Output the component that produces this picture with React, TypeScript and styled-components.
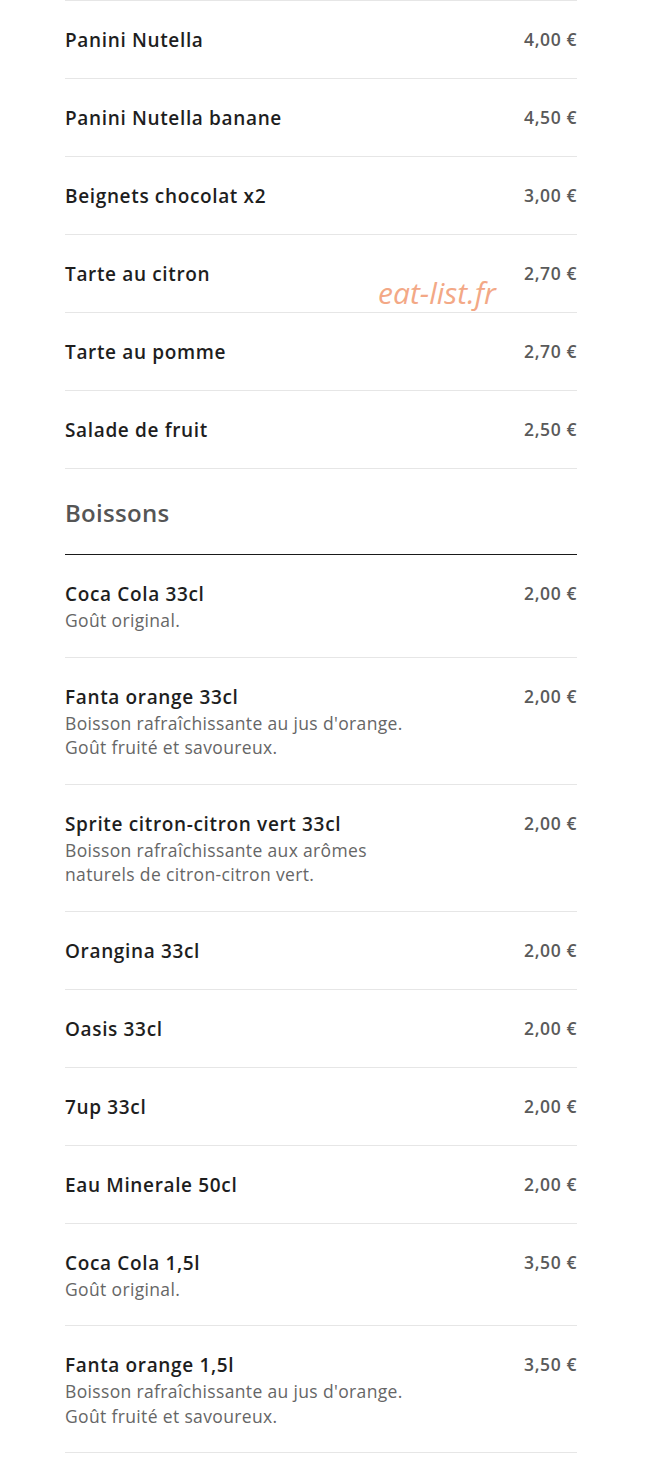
import React from "react";
import styled, { createGlobalStyle } from "styled-components";

const GlobalStyle = createGlobalStyle`
  body {
    margin: 0;
    background: #ffffff;
    font-family: "Open Sans", "Noto Sans", sans-serif;
  }
`;

const Page = styled.div`
  position: relative;
  width: 646px;
  padding: 0 69px 0 65px;
  box-sizing: border-box;
`;

const List = styled.div<{ $ruled?: boolean }>`
  display: flex;
  flex-direction: column;
  border-top: ${(p) => (p.$ruled ? "1px solid #e6e6e6" : "none")};
`;

const Row = styled.div`
  display: flex;
  justify-content: space-between;
  align-items: flex-start;
  padding: 25px 0 24px;
  border-bottom: 1px solid #e6e6e6;
`;

const Info = styled.div`
  display: flex;
  flex-direction: column;
`;

const Name = styled.div`
  font-size: 19px;
  line-height: 28px;
  font-weight: 600;
  letter-spacing: 0.65px;
  color: #1e1e1e;
`;

const Desc = styled.div`
  font-size: 17.5px;
  line-height: 24.5px;
  letter-spacing: 0.35px;
  color: #666666;
`;

const Price = styled.div`
  font-size: 17.5px;
  line-height: 26px;
  font-weight: 600;
  letter-spacing: 0.6px;
  color: #5a5a5a;
  white-space: nowrap;
`;

const Heading = styled.h2`
  margin: 0;
  padding: 27px 0 25px;
  font-size: 24px;
  line-height: 33px;
  font-weight: 600;
  letter-spacing: 0.3px;
  color: #555555;
  border-bottom: 1px solid #1a1a1a;
`;

const Watermark = styled.div`
  position: absolute;
  left: 378px;
  top: 272px;
  font-size: 30px;
  font-style: italic;
  color: #f3a886;
`;

type Item = { name: string; price: string; desc?: string[] };

const desserts: Item[] = [
  { name: "Panini Nutella", price: "4,00 €" },
  { name: "Panini Nutella banane", price: "4,50 €" },
  { name: "Beignets chocolat x2", price: "3,00 €" },
  { name: "Tarte au citron", price: "2,70 €" },
  { name: "Tarte au pomme", price: "2,70 €" },
  { name: "Salade de fruit", price: "2,50 €" },
];

const drinks: Item[] = [
  { name: "Coca Cola 33cl", price: "2,00 €", desc: ["Goût original."] },
  {
    name: "Fanta orange 33cl",
    price: "2,00 €",
    desc: ["Boisson rafraîchissante au jus d'orange.", "Goût fruité et savoureux."],
  },
  {
    name: "Sprite citron-citron vert 33cl",
    price: "2,00 €",
    desc: ["Boisson rafraîchissante aux arômes", "naturels de citron-citron vert."],
  },
  { name: "Orangina 33cl", price: "2,00 €" },
  { name: "Oasis 33cl", price: "2,00 €" },
  { name: "7up 33cl", price: "2,00 €" },
  { name: "Eau Minerale 50cl", price: "2,00 €" },
  { name: "Coca Cola 1,5l", price: "3,50 €", desc: ["Goût original."] },
  {
    name: "Fanta orange 1,5l",
    price: "3,50 €",
    desc: ["Boisson rafraîchissante au jus d'orange.", "Goût fruité et savoureux."],
  },
];

const MenuRow: React.FC<{ item: Item }> = ({ item }) => (
  <Row>
    <Info>
      <Name>{item.name}</Name>
      {item.desc?.map((line) => (
        <Desc key={line}>{line}</Desc>
      ))}
    </Info>
    <Price>{item.price}</Price>
  </Row>
);

const App: React.FC = () => {
  return (
    <>
      <GlobalStyle />
      <Page>
        <List $ruled>
          {desserts.map((item) => (
            <MenuRow key={item.name} item={item} />
          ))}
        </List>
        <Heading>Boissons</Heading>
        <List>
          {drinks.map((item) => (
            <MenuRow key={item.name} item={item} />
          ))}
        </List>
        <Watermark>eat-list.fr</Watermark>
      </Page>
    </>
  );
};

export default App;
